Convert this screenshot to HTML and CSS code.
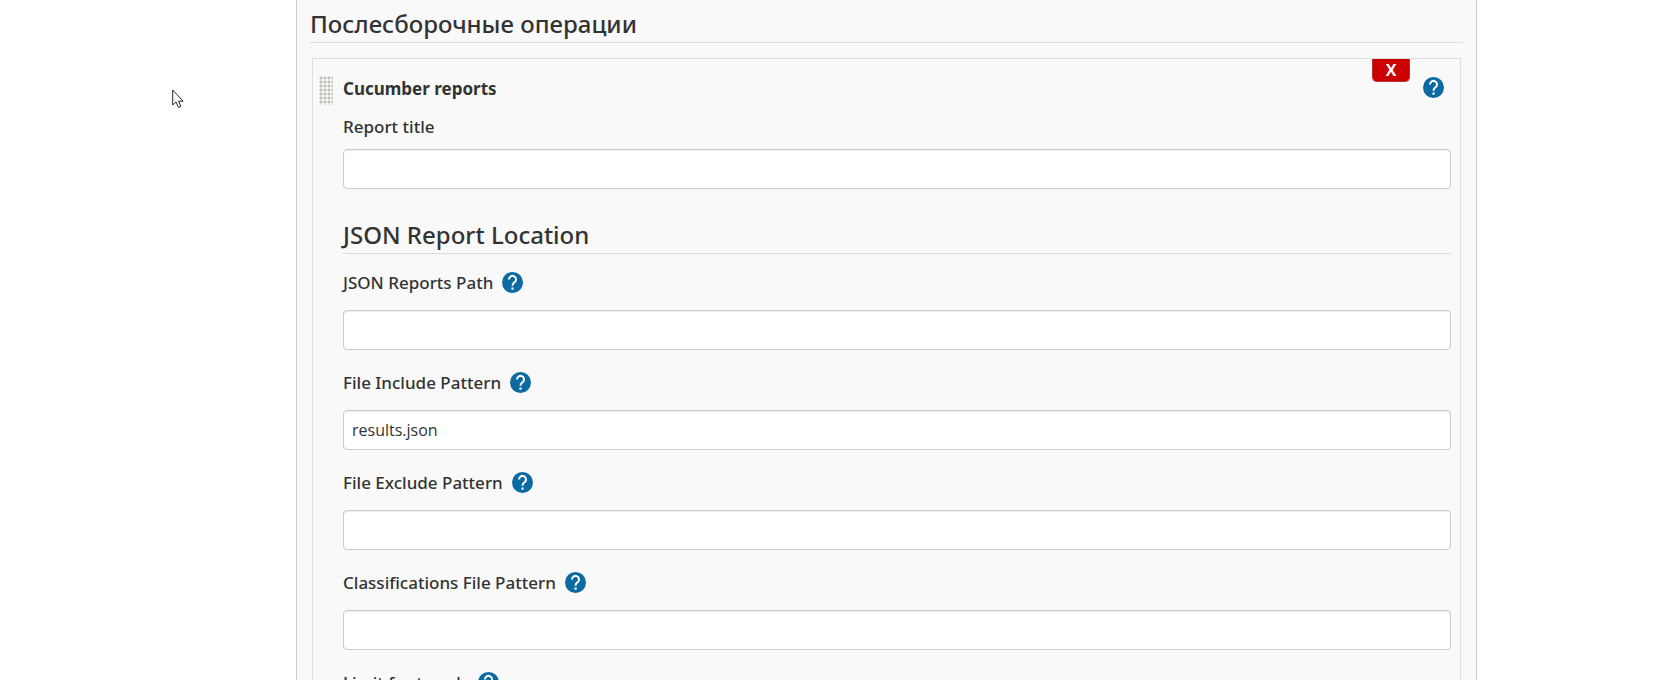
FILE: index.html
```html
<!DOCTYPE html>
<html lang="ru">
<head>
<meta charset="utf-8">
<title>Послесборочные операции</title>
<link rel="stylesheet" href="styles.css">
</head>
<body>
<svg class="sprite" aria-hidden="true">
  <symbol id="help" viewBox="0 0 24 24">
    <circle cx="12" cy="12" r="12" fill="#0b6aa2"/>
    <path d="M8 8.500a4 4 0 1 1 6.800 2.800c-1.700 1.500-2.800 2.100-2.800 4.400" fill="none" stroke="#fff" stroke-width="2.300"/>
    <rect x="10.800" y="17.700" width="2.500" height="2.500" fill="#fff"/>
  </symbol>
</svg>
<main class="panel">
  <h2 class="section-title">Послесборочные операции</h2>
  <section class="step">
    <header class="step-header">
      <span class="drag-handle"></span>
      <h3 class="step-title">Cucumber reports</h3>
      <button class="delete" type="button">X</button>
      <button class="help step-help" type="button" aria-label="Help"><svg><use href="#help"/></svg></button>
    </header>
    <div class="step-body">
      <div class="field field-compact">
        <div class="field-label"><label for="title">Report title</label></div>
        <input class="text-input" id="title" type="text">
      </div>
      <h2 class="section-title group-title">JSON Report Location</h2>
      <div class="field">
        <div class="field-label"><label for="path">JSON Reports Path</label><button class="help" type="button" aria-label="Help"><svg><use href="#help"/></svg></button></div>
        <input class="text-input" id="path" type="text">
      </div>
      <div class="field">
        <div class="field-label"><label for="include">File Include Pattern</label><button class="help" type="button" aria-label="Help"><svg><use href="#help"/></svg></button></div>
        <input class="text-input" id="include" type="text" value="results.json">
      </div>
      <div class="field">
        <div class="field-label"><label for="exclude">File Exclude Pattern</label><button class="help" type="button" aria-label="Help"><svg><use href="#help"/></svg></button></div>
        <input class="text-input" id="exclude" type="text">
      </div>
      <div class="field">
        <div class="field-label"><label for="classifications">Classifications File Pattern</label><button class="help" type="button" aria-label="Help"><svg><use href="#help"/></svg></button></div>
        <input class="text-input" id="classifications" type="text">
      </div>
      <div class="field">
        <div class="field-label"><label for="limit">Limit for trends</label><button class="help" type="button" aria-label="Help"><svg><use href="#help"/></svg></button></div>
        <input class="text-input" id="limit" type="text">
      </div>
    </div>
  </section>
</main>
<svg class="pointer" viewBox="0 0 12 20" aria-hidden="true"><path d="M.7 1v15l3.300-3 2.500 5.500 2.400-1-2.400-5.300h4.600z" fill="#fff" stroke="#223" stroke-width="1"/></svg>
</body>
</html>
```
FILE: styles.css
```css
* {
  box-sizing: border-box;
}

html {
  overflow: hidden;
}

body {
  margin: 0;
  height: 100vh;
  overflow: hidden;
  background: #fff;
  color: #333;
  font-family: "Noto Sans", "Open Sans", sans-serif;
  font-size: 17px;
  font-weight: 500;
}

.sprite {
  display: none;
}

.panel {
  margin: 0 190px 0 296px;
  padding: 0 13px;
  background: #f9f9f9;
  border: solid #ccc;
  border-width: 0 1px;
}

.section-title {
  margin: 0;
  padding: 6px 0 0;
  border-bottom: 1px solid #ddd;
  font-size: 24px;
  font-weight: 500;
  line-height: 36px;
}

.step {
  margin: 15px 2px 0;
  border: 1px solid #ddd;
}

.step-header {
  display: flex;
  align-items: flex-start;
  height: 57px;
  padding: 0 16px 0 6px;
}

.drag-handle {
  width: 14px;
  height: 29px;
  margin: 17px 10px 0 0;
  background: radial-gradient(circle, #c0c0b8 1px, transparent 2px) 0 0 / 4px 4px;
}

.step-title {
  flex: 1;
  margin: 18px 0 0;
  font-size: 17px;
  font-weight: 700;
  line-height: 24px;
}

.delete {
  width: 38px;
  height: 23px;
  padding: 0;
  border: 1px solid #b33;
  border-top: 0;
  border-radius: 0 0 5px 5px;
  background: #c00;
  color: #fff;
  font: 700 16px/22px "Open Sans", sans-serif;
}

.help {
  display: block;
  width: 21px;
  height: 21px;
  padding: 0;
  border: 0;
  background: none;
}

.help svg {
  display: block;
  width: 100%;
  height: 100%;
}

.step-help {
  margin: 18px 0 0 13px;
}

.step-body {
  padding: 0 9px 0 30px;
}

.field {
  margin-bottom: 22px;
}

.field-label {
  display: flex;
  gap: 9px;
  margin-bottom: 17px;
  line-height: 21px;
}

.field-compact .field-label {
  margin-bottom: 12px;
}

.text-input {
  display: block;
  width: 100%;
  height: 40px;
  padding: 0 8px;
  border: 1px solid #ccc;
  border-radius: 4px;
  background: #fff;
  box-shadow: inset 0 1px 1px rgba(0, 0, 0, 0.08);
  color: #333;
  font: 400 16px "Open Sans", "Noto Sans", sans-serif;
}

.group-title {
  margin-bottom: 18px;
}

.pointer {
  position: absolute;
  top: 89px;
  left: 172px;
  width: 12px;
  height: 20px;
}
```
